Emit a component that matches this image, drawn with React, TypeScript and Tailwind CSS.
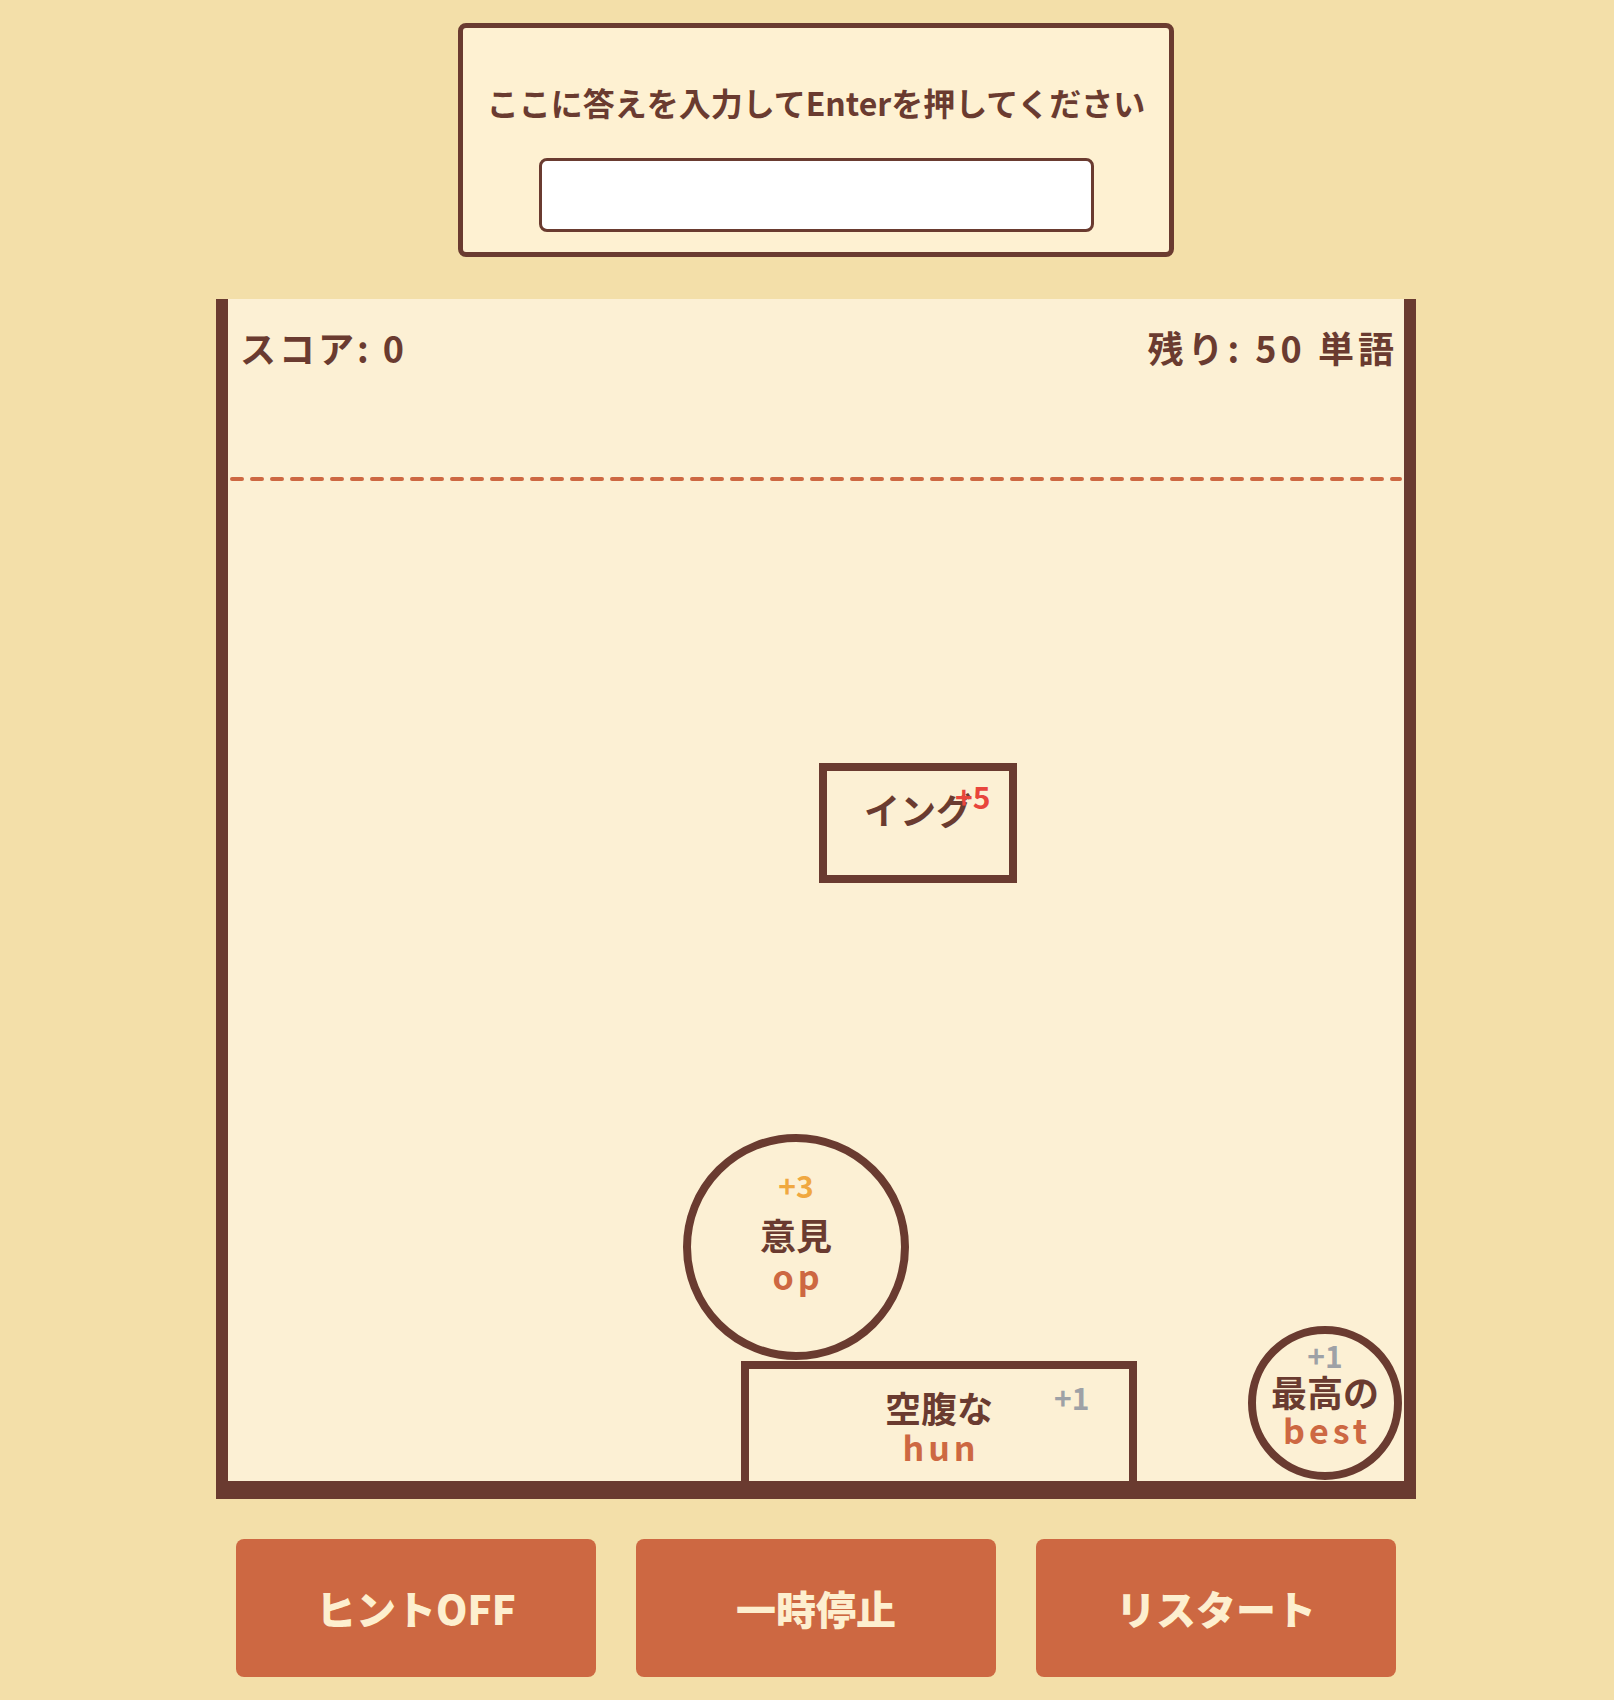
import React from 'react';

const brown = 'text-[#6a3b30]';
const word = `text-[36px] font-bold leading-none ${brown}`;
const hint = 'pl-[4px] text-[34px] font-semibold leading-none tracking-[4px] text-[#cd6842]';
const bonus = 'text-[30px] font-bold leading-none';

export default function App() {
  return (
    <div className="min-h-[1700px] w-full bg-[#f3dfa9] font-['Noto_Sans_CJK_JP',sans-serif]">
      <div className="flex flex-col items-center pl-[18px] pt-[23px]">
        {/* answer box */}
        <div className="flex w-[716px] flex-col items-center rounded-[8px] border-[5px] border-[#6a3b30] bg-[#fef1d2] pt-[58px] pb-[20px]">
          <label className={`text-[32px] font-bold leading-none ${brown}`}>
            ここに答えを入力してEnterを押してください
          </label>
          <input
            type="text"
            className="mt-[40px] h-[74px] w-[555px] rounded-[8px] border-[3px] border-[#6a3b30] bg-white px-3 text-[28px] outline-none"
          />
        </div>

        {/* game area */}
        <div className="relative mt-[42px] h-[1200px] w-[1200px] border-x-[12px] border-b-[18px] border-[#6a3b30] bg-[#fcf0d4]">
          <div className={`flex justify-between pl-[12px] pr-[6px] pt-[30px] text-[36px] font-bold leading-none tracking-[3px] ${brown}`}>
            <span>スコア: 0</span>
            <span className="tracking-[4px]">残り: 50 単語</span>
          </div>
          <svg className="mt-[112px] block h-[4px] w-full" viewBox="0 0 1176 4" preserveAspectRatio="none">
            <line x1="4" y1="2" x2="1172" y2="2" stroke="#cd6842" strokeWidth="4" strokeDasharray="10 10" strokeLinecap="round" />
          </svg>

          {/* falling pieces: their place on the board is the content */}
          {/* イング */}
          <div className="absolute left-[591px] top-[464px] flex h-[120px] w-[198px] flex-col items-center border-[8px] border-[#6a3b30] pt-[20px]">
            <span className={word}>イング</span>
            <span className={`absolute left-[128px] top-[10px] ${bonus} text-[#e8453c]`}>+5</span>
          </div>

          {/* 意見 */}
          <div className="absolute left-[455px] top-[835px] flex h-[226px] w-[226px] flex-col items-center rounded-full border-[8px] border-[#6a3b30] pt-[28px]">
            <span className={`${bonus} text-[#f0a840]`}>+3</span>
            <span className={`mt-[16px] ${word}`}>意見</span>
            <span className={`mt-[7px] ${hint}`}>op</span>
          </div>

          {/* 空腹な */}
          <div className="absolute left-[513px] top-[1062px] flex h-[120px] w-[396px] flex-col items-center border-[8px] border-b-0 border-[#6a3b30] pt-[20px]">
            <span className={word}>空腹な</span>
            <span className={`mt-[5px] ${hint}`}>hun</span>
            <span className={`absolute left-[305px] top-[13px] ${bonus} text-[#9ea1a6]`}>+1</span>
          </div>

          {/* 最高の */}
          <div className="absolute left-[1020px] top-[1027px] flex h-[154px] w-[154px] flex-col items-center rounded-full border-[8px] border-[#6a3b30] pt-[6px]">
            <span className={`${bonus} text-[#9ea1a6]`}>+1</span>
            <span className={`mt-[3px] ${word}`}>最高の</span>
            <span className={`mt-[4px] ${hint}`}>best</span>
          </div>
        </div>

        {/* buttons */}
        <div className="mt-[40px] flex gap-[40px]">
          {['ヒントOFF', '一時停止', 'リスタート'].map((t) => (
            <button
              key={t}
              className="flex h-[138px] w-[360px] items-center justify-center rounded-[8px] bg-[#cd6842] text-[40px] font-black leading-none text-[#fdefcf]"
            >
              {t}
            </button>
          ))}
        </div>
      </div>
    </div>
  );
}
